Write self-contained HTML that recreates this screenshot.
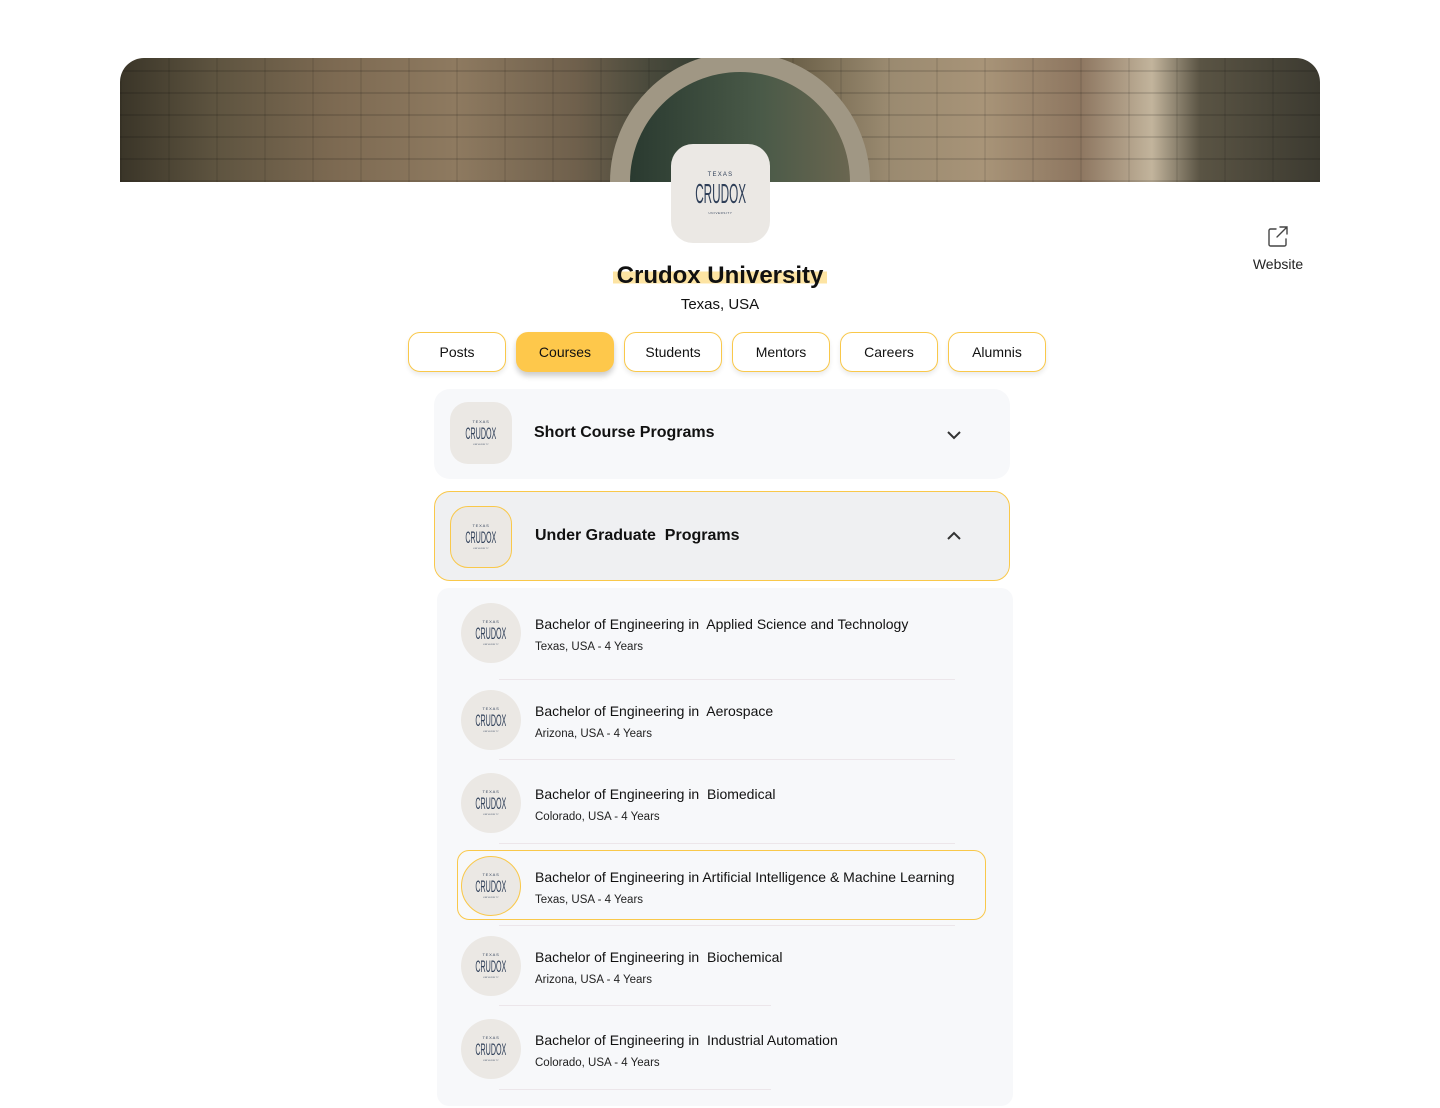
<!DOCTYPE html>
<html><head><meta charset="utf-8"><style>
*{box-sizing:border-box;margin:0;padding:0}
body{width:1440px;height:1108px;background:#fff;font-family:"Liberation Sans",sans-serif;color:#111;position:relative;overflow:hidden}
.banner{position:absolute;left:120px;top:58px;width:1200px;height:124px;border-radius:24px 24px 0 0;overflow:hidden;
background:linear-gradient(90deg,#3a3528 0%,#5e5440 8%,#7d6a52 18%,#8e7a60 28%,#6f604c 38%,#4a4a3c 44%,#2f3a30 50%,#6b6048 56%,#9a8a70 64%,#a89478 72%,#8d7660 80%,#c2b49c 86%,#5a5444 90%,#3c3a30 100%)}
.banner:before{content:"";position:absolute;inset:0;background:repeating-linear-gradient(0deg,rgba(0,0,0,.12) 0 2px,transparent 2px 22px),repeating-linear-gradient(90deg,rgba(0,0,0,.08) 0 2px,transparent 2px 48px)}
.arch{position:absolute;left:490px;top:-6px;width:260px;height:200px;border:20px solid #a09784;border-bottom:none;border-radius:130px 130px 0 0;background:linear-gradient(90deg,#2a3a30,#4a5a48 60%,#6a6650)}
.logo{position:absolute;background:#ebe8e4;display:flex;flex-direction:column;align-items:center;justify-content:center;color:#2f3f58;font-family:"Liberation Sans Narrow","Liberation Sans",sans-serif}
.logo .t{letter-spacing:.2em;line-height:1}
.logo .c{line-height:1;transform:scale(.42,1);white-space:nowrap}
.logo .u{letter-spacing:.2em;line-height:1}
.big{left:671px;top:144px;width:99px;height:99px;border-radius:22px}
.big .t{font-size:6px}.big .c{font-size:28px;margin:2px 0 4px}.big .u{font-size:3px}
.sm .t{font-size:4px}.sm .c{font-size:17px;margin:1px 0 2px}.sm .u{font-size:2px}
h1{position:absolute;left:0;width:1440px;top:262px;text-align:center;font-size:24px;font-weight:700}
h1 span{background:linear-gradient(0deg,transparent 20%,#fde4a3 20%,#fde4a3 65%,transparent 65%);padding:0 4px}
.loc{position:absolute;width:1440px;top:296px;text-align:center;font-size:15px}
.web{position:absolute;left:1251px;top:224px;font-size:14px;color:#222;text-align:center;width:54px}
.tabs{position:absolute;top:332px;left:408px;display:flex;gap:10px}
.tab{width:98px;height:40px;border:1px solid #f9c84a;border-radius:12px;display:flex;align-items:center;justify-content:center;font-size:14px;box-shadow:0 3px 5px rgba(0,0,0,.08);background:#fff}
.tab.on{background:#fec84b;border-color:#fec84b;box-shadow:0 4px 6px rgba(0,0,0,.2)}
.acc{position:absolute;left:434px;width:576px;height:90px;border-radius:16px;background:#f7f8fa}
.acc .logo{left:16px;top:13px;width:62px;height:62px;border-radius:18px}
.acc .ttl{position:absolute;left:100px;top:35px;font-size:16px;font-weight:700;color:#111}
.acc svg{position:absolute;left:512px;top:41px}
.panel{position:absolute;left:437px;top:588px;width:576px;height:518px;background:#f7f8fa;border-radius:12px}
.row{position:absolute;left:0;width:576px}
.row .logo{left:24px;width:60px;height:60px;border-radius:50%}
.row .a{position:absolute;left:98px;font-size:14px;color:#111}
.row .b{position:absolute;left:98px;font-size:11.5px;color:#222}
.sep{position:absolute;height:1px;background:#ece6ea}
</style></head><body>
<div class="banner"><div class="arch"></div></div>
<div class="logo big"><div class="t">TEXAS</div><div class="c">CRUDOX</div><div class="u">UNIVERSITY</div></div>
<h1><span>Crudox University</span></h1>
<div class="loc">Texas, USA</div>
<div class="web"><svg width="26" height="26" viewBox="0 0 26 26" style="display:block;margin:0 auto 6px" fill="none" stroke="#444" stroke-width="1.4" stroke-linecap="round"><path d="M11 5H5.5a1.5 1.5 0 0 0-1.5 1.5v14a1.5 1.5 0 0 0 1.5 1.5h14a1.5 1.5 0 0 0 1.5-1.5V15"/><path d="M15 3h7v7M22 3L12 13"/></svg>Website</div>
<div class="tabs"><div class="tab">Posts</div><div class="tab on">Courses</div><div class="tab">Students</div><div class="tab">Mentors</div><div class="tab">Careers</div><div class="tab">Alumnis</div></div>

<div class="acc" style="top:389px"><div class="logo sm"><div class="t">TEXAS</div><div class="c">CRUDOX</div><div class="u">UNIVERSITY</div></div><div class="ttl">Short Course Programs</div><svg width="16" height="10" viewBox="0 0 16 10" fill="none" stroke="#333" stroke-width="2"><path d="M2 2l6 6 6-6"/></svg></div>
<div class="acc" style="top:491px;background:#eff0f2;border:1px solid #f9c84a"><div class="logo sm" style="left:15px;top:14px;border:1px solid #f9c84a"><div class="t">TEXAS</div><div class="c">CRUDOX</div><div class="u">UNIVERSITY</div></div><div class="ttl" style="top:35px">Under Graduate&nbsp; Programs</div><svg width="16" height="10" viewBox="0 0 16 10" fill="none" stroke="#333" stroke-width="2" style="top:39px;left:511px"><path d="M2 8l6-6 6 6"/></svg></div>

<div class="panel">
<div class="row" style="top:15px"><div class="logo sm"><div class="t">TEXAS</div><div class="c">CRUDOX</div><div class="u">UNIVERSITY</div></div><div class="a" style="top:13px">Bachelor of Engineering in&nbsp; Applied Science and Technology</div><div class="b" style="top:38px">Texas, USA - 4 Years</div></div>
<div class="sep" style="left:62px;width:456px;top:91px"></div>
<div class="row" style="top:102px"><div class="logo sm"><div class="t">TEXAS</div><div class="c">CRUDOX</div><div class="u">UNIVERSITY</div></div><div class="a" style="top:13px">Bachelor of Engineering in&nbsp; Aerospace</div><div class="b" style="top:38px">Arizona, USA - 4 Years</div></div>
<div class="sep" style="left:62px;width:456px;top:171px"></div>
<div class="row" style="top:185px"><div class="logo sm"><div class="t">TEXAS</div><div class="c">CRUDOX</div><div class="u">UNIVERSITY</div></div><div class="a" style="top:13px">Bachelor of Engineering in&nbsp; Biomedical</div><div class="b" style="top:38px">Colorado, USA - 4 Years</div></div>
<div class="sep" style="left:62px;width:456px;top:255px"></div>
<div style="position:absolute;left:20px;top:262px;width:529px;height:70px;border:1px solid #f9c84a;border-radius:12px"></div>
<div class="row" style="top:268px"><div class="logo sm" style="border:1px solid #f9c84a"><div class="t">TEXAS</div><div class="c">CRUDOX</div><div class="u">UNIVERSITY</div></div><div class="a" style="top:13px">Bachelor of Engineering in Artificial Intelligence &amp; Machine Learning</div><div class="b" style="top:38px">Texas, USA - 4 Years</div></div>
<div class="sep" style="left:62px;width:456px;top:337px"></div>
<div class="row" style="top:348px"><div class="logo sm"><div class="t">TEXAS</div><div class="c">CRUDOX</div><div class="u">UNIVERSITY</div></div><div class="a" style="top:13px">Bachelor of Engineering in&nbsp; Biochemical</div><div class="b" style="top:38px">Arizona, USA - 4 Years</div></div>
<div class="sep" style="left:62px;width:272px;top:417px"></div>
<div class="row" style="top:431px"><div class="logo sm"><div class="t">TEXAS</div><div class="c">CRUDOX</div><div class="u">UNIVERSITY</div></div><div class="a" style="top:13px">Bachelor of Engineering in&nbsp; Industrial Automation</div><div class="b" style="top:38px">Colorado, USA - 4 Years</div></div>
<div class="sep" style="left:62px;width:272px;top:501px"></div>
</div>
</body></html>
